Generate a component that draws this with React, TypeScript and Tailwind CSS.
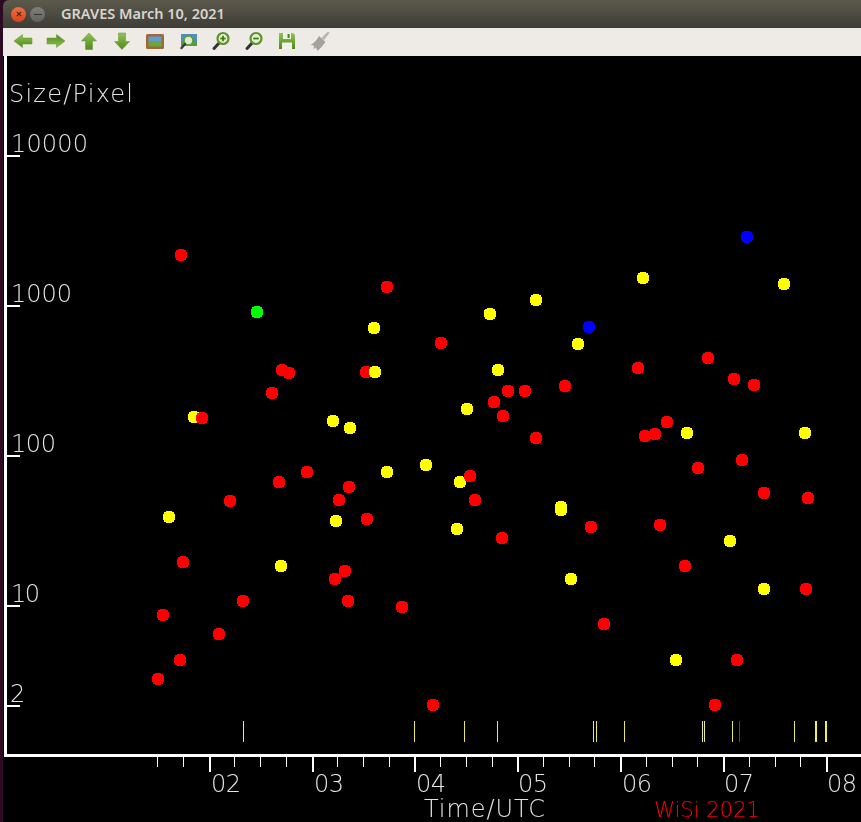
const SANS = "font-['DejaVu_Sans',sans-serif]";

const RED = [
  [181, 255], [387, 287], [441, 343], [282, 370], [289, 373], [366, 372], [272, 393], [202, 418],
  [494, 402], [503, 416], [508, 391], [525, 391], [565, 386], [638, 368], [708, 358], [734, 379],
  [754, 385], [536, 438], [645, 436], [655, 434], [667, 422], [470, 476], [742, 460], [698, 468],
  [307, 472], [279, 482], [349, 487], [230, 501], [339, 500], [475, 500], [764, 493], [808, 498],
  [367, 519], [660, 525], [591, 527], [502, 538], [183, 562], [685, 566], [345, 571], [335, 579],
  [806, 589], [163, 615], [243, 601], [348, 601], [402, 607], [604, 624], [219, 634], [180, 660],
  [737, 660], [158, 679], [433, 705], [715, 705],
];
const YELLOW = [
  [643, 278], [784, 284], [536, 300], [490, 314], [374, 328], [578, 344], [498, 370], [375, 372],
  [194, 417], [333, 421], [350, 428], [467, 409], [687, 433], [805, 433], [387, 472], [426, 465],
  [460, 482], [561, 507], [561, 510], [169, 517], [336, 521], [457, 529], [730, 541], [281, 566],
  [571, 579], [764, 589], [676, 660],
];
const BLUE = [[747, 237], [589, 327]];
const GREEN = [[257, 312]];

// plotted in time order, later points sit on top
const dots = [
  ...RED.map(([x, y]) => ({ x, y, fill: "#ff0000" })),
  ...YELLOW.map(([x, y]) => ({ x, y, fill: "#ffff00" })),
  ...BLUE.map(([x, y]) => ({ x, y, fill: "#0000ff" })),
  ...GREEN.map(([x, y]) => ({ x, y, fill: "#00ff00" })),
].sort((a, b) => a.x - b.x);

const MAJOR = [209, 312, 414, 517, 620, 723, 826];
const MINOR = [157, 183, 234, 260, 286, 337, 363, 389, 440, 466, 492, 543, 569, 594, 646, 672, 697, 749, 775, 800];
const Y_TICKS = [156, 306, 456, 606, 706];
const MARKS = [
  { x: 243, w: 1, c: "#e8e88c" }, { x: 414, w: 1, c: "#e8e85c" }, { x: 464, w: 1, c: "#e8e85c" },
  { x: 497, w: 1, c: "#e8e85c" }, { x: 593, w: 1, c: "#e8e85c" }, { x: 596, w: 1, c: "#e8e85c" },
  { x: 624, w: 1, c: "#e8e85c" }, { x: 702, w: 1, c: "#e8e8a0" }, { x: 704, w: 1, c: "#e8e8a0" },
  { x: 732, w: 1, c: "#e8e85c" }, { x: 739, w: 1, c: "#b02020" }, { x: 794, w: 1, c: "#e8e85c" },
  { x: 815, w: 2, c: "#f0f050" }, { x: 825, w: 2, c: "#f0f050" },
];
const Y_LABELS = [
  { t: "Size/Pixel", x: 9, y: 102, w: 124 },
  { t: "10000", x: 11, y: 152, w: 77 },
  { t: "1000", x: 11, y: 302, w: 61 },
  { t: "100", x: 11, y: 452, w: 45 },
  { t: "10", x: 11, y: 602, w: 29 },
  { t: "2", x: 10, y: 702, w: 13 },
];
const X_LABELS = [
  { t: "02", x: 211 }, { t: "03", x: 314 }, { t: "04", x: 416 }, { t: "05", x: 518 },
  { t: "06", x: 622 }, { t: "07", x: 724 }, { t: "08", x: 827 },
];

const ArrowGrad = ({ id }: { id: string }) => (
  <defs>
    <linearGradient id={id} x1="0" y1="0" x2="0" y2="1">
      <stop offset="0" stopColor="#93c255" />
      <stop offset="1" stopColor="#4e8a1c" />
    </linearGradient>
  </defs>
);

const ToolIcon = ({ name }: { name: string }) => {
  const id = "g-" + name;
  if (name === "left" || name === "right") {
    return (
      <svg viewBox="0 0 20 20" className="h-5 w-5">
        <ArrowGrad id={id} />
        <path
          transform={name === "right" ? "rotate(180 10 10)" : undefined}
          d="M1 10 L9.5 3.5 V7 H19 V13 H9.5 V16.5 Z"
          fill={`url(#${id})`}
          stroke="#5f9428"
          strokeWidth="0.5"
        />
      </svg>
    );
  }
  if (name === "up" || name === "down") {
    return (
      <svg viewBox="0 0 20 20" className="h-5 w-5">
        <ArrowGrad id={id} />
        <path
          d={name === "up" ? "M10 2 L17.5 10 H13.5 V18.5 H6.5 V10 H2.5 Z" : "M10 18.5 L17.5 10.5 H13.5 V2 H6.5 V10.5 H2.5 Z"}
          fill={`url(#${id})`}
          stroke="#5f9428"
          strokeWidth="0.5"
        />
      </svg>
    );
  }
  if (name === "picture") {
    return (
      <svg viewBox="0 0 20 20" className="h-5 w-5">
        <rect x="1" y="3" width="18" height="15" rx="1.5" fill="#a0673a" />
        <rect x="3.5" y="5.5" width="13" height="4.5" fill="#5f9cd0" />
        <rect x="3.5" y="10" width="13" height="5.5" fill="#6aa63a" />
      </svg>
    );
  }
  if (name === "fit") {
    return (
      <svg viewBox="0 0 20 20" className="h-5 w-5">
        <rect x="3" y="3" width="16" height="12" fill="#4f8fb8" />
        <rect x="3" y="10" width="16" height="5" fill="#5c9a3c" />
        <circle cx="10.5" cy="9.5" r="4.5" fill="#dcebc8" stroke="#5c9a3c" strokeWidth="1.6" />
        <path d="M7 13 L3.5 17" stroke="#3a3a3a" strokeWidth="2.4" strokeLinecap="round" />
      </svg>
    );
  }
  if (name === "zoomin" || name === "zoomout") {
    return (
      <svg viewBox="0 0 20 20" className="h-5 w-5">
        <path d="M8.5 11.5 L3 17.5" stroke="#333333" strokeWidth="3" strokeLinecap="round" />
        <circle cx="12" cy="7.5" r="5.5" fill="#e6efd8" stroke="#5f9428" strokeWidth="2.2" />
        <path d="M9.3 7.5 H14.7" stroke="#3f7a18" strokeWidth="1.8" />
        {name === "zoomin" && <path d="M12 4.8 V10.2" stroke="#3f7a18" strokeWidth="1.8" />}
      </svg>
    );
  }
  if (name === "save") {
    return (
      <svg viewBox="0 0 20 20" className="h-5 w-5">
        <ArrowGrad id={id} />
        <path d="M2 2 H16 L18 4 V18 H2 Z" fill={`url(#${id})`} />
        <rect x="6" y="2" width="8" height="6" fill="#eef0e4" />
        <rect x="10.5" y="3" width="2.2" height="4" fill="#4e8a1c" />
        <rect x="5" y="11.5" width="10" height="6.5" fill="#f2f2ea" />
      </svg>
    );
  }
  return (
    <svg viewBox="0 0 20 20" className="h-5 w-5">
      <path d="M11.5 7 L18 0.5 L19.5 2 L14 9 Z" fill="#b4b4b0" />
      <path d="M9 5 L15.5 11 Q12 16 7.5 20 L6 16.5 L3.5 18 L4 14.5 L0.5 14 Q6 11 9 5 Z" fill="#a2a29e" />
    </svg>
  );
};

const TOOLS = ["left", "right", "up", "down", "picture", "fit", "zoomin", "zoomout", "save", "clear"];

const Chart = () => (
  <svg viewBox="3 56 858 766" className={"block h-full w-full will-change-transform " + SANS}>
    <rect x="4" y="56" width="3" height="700" fill="#ffffff" shapeRendering="crispEdges" />
    <rect x="4" y="754" width="857" height="3" fill="#ffffff" shapeRendering="crispEdges" />
    {Y_TICKS.map((y) => (
      <rect key={y} x="7" y={y - 1} width="13" height="2" fill="#ffffff" shapeRendering="crispEdges" />
    ))}
    {MAJOR.map((x) => (
      <rect key={x} x={x} y="757" width="2" height="15" fill="#ffffff" shapeRendering="crispEdges" />
    ))}
    {MINOR.map((x) => (
      <rect key={x} x={x} y="757" width="1" height="10" fill="#ffffff" shapeRendering="crispEdges" />
    ))}
    {MARKS.map((m) => (
      <rect key={m.x} x={m.x} y="721" width={m.w} height="21" fill={m.c} shapeRendering="crispEdges" />
    ))}
    {dots.map((d, i) => (
      <circle key={i} cx={d.x} cy={d.y} r="6.5" fill={d.fill} shapeRendering="crispEdges" />
    ))}
    {Y_LABELS.map((l) => (
      <text key={l.t} x={l.x} y={l.y} textLength={l.w} fontSize="24" fontWeight="200" fill="#e4e4e4">
        {l.t}
      </text>
    ))}
    {X_LABELS.map((l) => (
      <text key={l.t} x={l.x} y="792" textLength="30" fontSize="24" fontWeight="200" fill="#e4e4e4">
        {l.t}
      </text>
    ))}
    <text x="424" y="817" textLength="121" fontSize="24" fontWeight="200" fill="#e4e4e4">
      Time/UTC
    </text>
    <text x="654" y="817" textLength="106" fontSize="21.5" fontWeight="200" fill="#ff0000">
      WiSi 2021
    </text>
  </svg>
);

export default function App() {
  return (
    <div className="flex h-[822px] w-[861px] flex-col overflow-hidden bg-[#2c0a24] pl-[3px]">
      <div className="flex h-[28px] items-center rounded-tl-md bg-gradient-to-b from-[#5c5a4c] to-[#3d3c36]">
        <div className="ml-[8px] flex h-[15px] w-[15px] items-center justify-center rounded-full bg-gradient-to-b from-[#f0703c] to-[#d8431f]">
          <svg viewBox="0 0 8 8" className="h-2 w-2">
            <path d="M1.8 1.8 L6.2 6.2 M6.2 1.8 L1.8 6.2" stroke="#4a2418" strokeWidth="1.2" />
          </svg>
        </div>
        <div className="ml-[4px] flex h-[15px] w-[15px] items-center justify-center rounded-full bg-gradient-to-b from-[#80807a] to-[#62625c]">
          <div className="h-[1px] w-[8px] bg-[#35352f]" />
        </div>
        <span className="ml-[16px] font-['Noto_Sans',sans-serif] text-[14.5px] font-semibold text-[#d8d5cc]">
          GRAVES March 10, 2021
        </span>
      </div>
      <div className="flex h-[28px] items-center gap-[13px] bg-[#eeebe6] pb-[2px] pl-[10px]">
        {TOOLS.map((t) => (
          <ToolIcon key={t} name={t} />
        ))}
      </div>
      <div className="min-h-0 flex-1 bg-black">
        <Chart />
      </div>
    </div>
  );
}
